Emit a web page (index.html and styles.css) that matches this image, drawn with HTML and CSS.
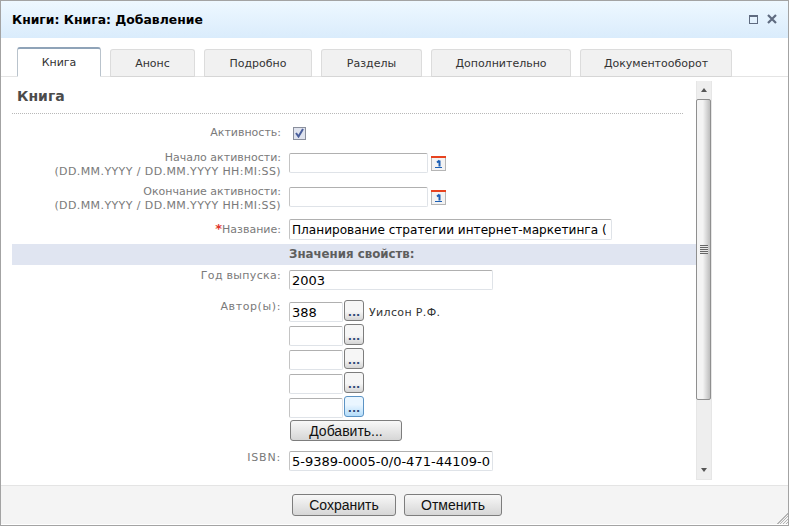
FILE: index.html
```html
<!DOCTYPE html>
<html lang="ru">
<head>
    <meta charset="UTF-8">
    <title>Книги: Книга: Добавление</title>
    <link rel="stylesheet" href="styles.css">
</head>
<body>
    <div class="window">
        <!-- Title bar -->
        <header class="titlebar">
            <h1>Книги: Книга: Добавление</h1>
            <div class="win-icons">
                <span class="win-max"></span>
                <svg class="win-close" width="10" height="10" viewBox="0 0 10 10"><path d="M1 1L9 9M9 1L1 9" stroke="#5f6b80" stroke-width="2.2" fill="none"/></svg>
            </div>
        </header>

        <!-- Tabs -->
        <nav class="tabs">
            <a class="tab tab-active tab-w84">Книга</a>
            <a class="tab tab-w85">Анонс</a>
            <a class="tab tab-w108">Подробно</a>
            <a class="tab tab-w101">Разделы</a>
            <a class="tab tab-w140">Дополнительно</a>
            <a class="tab tab-w152">Документооборот</a>
        </nav>

        <!-- Main -->
        <main class="body">
            <div class="content">
                <h2>Книга</h2>
                <div class="form">
                    <div class="row row-check">
                        <label>Активность:</label>
                        <div class="fake-check">
                            <svg width="9" height="10" viewBox="0 0 9 10"><path d="M1 5L3.5 8.5L8 1" stroke="#4a5f9c" stroke-width="2" fill="none"/></svg>
                        </div>
                    </div>
                    <div class="row row-date">
                        <label>Начало активности:<br><span class="latin">(DD.MM.YYYY / DD.MM.YYYY HH:MI:SS)</span></label>
                        <div class="ctrl">
                            <input class="input w-date" type="text">
                            <svg class="cal" width="15" height="15" viewBox="0 0 15 15"><rect x="0.5" y="0.5" width="14" height="14" fill="#f3f3f3" stroke="#b5b5b5"/><rect x="0" y="0" width="15" height="2" fill="#e8431f"/><path d="M8.5 4.5V10.5M6 6.5L8.5 4.5" stroke="#1c5fb5" stroke-width="2" fill="none"/><rect x="4" y="11" width="7" height="1" fill="#1c5fb5"/></svg>
                        </div>
                    </div>
                    <div class="row row-date">
                        <label>Окончание активности:<br><span class="latin">(DD.MM.YYYY / DD.MM.YYYY HH:MI:SS)</span></label>
                        <div class="ctrl">
                            <input class="input w-date" type="text">
                            <svg class="cal" width="15" height="15" viewBox="0 0 15 15"><rect x="0.5" y="0.5" width="14" height="14" fill="#f3f3f3" stroke="#b5b5b5"/><rect x="0" y="0" width="15" height="2" fill="#e8431f"/><path d="M8.5 4.5V10.5M6 6.5L8.5 4.5" stroke="#1c5fb5" stroke-width="2" fill="none"/><rect x="4" y="11" width="7" height="1" fill="#1c5fb5"/></svg>
                        </div>
                    </div>
                    <div class="row row-name">
                        <label><span class="req">*</span>Название:</label>
                        <input class="input w-name" type="text" value="Планирование стратегии интернет-маркетинга (Wilson)">
                    </div>
                    <div class="band">Значения свойств:</div>
                    <div class="row row-year">
                        <label>Год выпуска:</label>
                        <input class="input w-long" type="text" value="2003">
                    </div>
                    <div class="row row-authors">
                        <label>Автор(ы):</label>
                        <div class="authors">
                            <div class="author">
                                <input class="input w-short" type="text" value="388">
                                <button class="dots" type="button">...</button>
                                <span class="author-name">Уилсон Р.Ф.</span>
                            </div>
                            <div class="author">
                                <input class="input w-short" type="text">
                                <button class="dots" type="button">...</button>
                            </div>
                            <div class="author">
                                <input class="input w-short" type="text">
                                <button class="dots" type="button">...</button>
                            </div>
                            <div class="author">
                                <input class="input w-short" type="text">
                                <button class="dots" type="button">...</button>
                            </div>
                            <div class="author">
                                <input class="input w-short" type="text">
                                <button class="dots dots-hover" type="button">...</button>
                            </div>
                            <button class="btn btn-add" type="button">Добавить...</button>
                        </div>
                    </div>
                    <div class="row row-isbn">
                        <label>ISBN:</label>
                        <input class="input w-long" type="text" value="5-9389-0005-0/0-471-44109-0">
                    </div>
                </div>
            </div>

            <!-- Scrollbar -->
            <div class="scrollbar">
                <div class="arrow arrow-up"></div>
                <div class="thumb"><span class="grip"></span></div>
                <div class="arrow arrow-down"></div>
            </div>
        </main>

        <!-- Footer -->
        <footer class="footer">
            <button class="btn btn-save" type="button">Сохранить</button>
            <button class="btn btn-cancel" type="button">Отменить</button>
            <span class="resizer"></span>
        </footer>
    </div>
</body>
</html>
```

FILE: styles.css
```css
* {
    box-sizing: border-box;
}
html, body {
    margin: 0;
    padding: 0;
    overflow: hidden;
}
body {
    width: 789px;
    height: 526px;
    font-family: "DejaVu Sans", Verdana, sans-serif;
    font-size: 11px;
    color: #333;
    background-color: #fff;
}
.window {
    position: relative;
    width: 789px;
    height: 526px;
    display: flex;
    flex-direction: column;
    border: 1px solid #a3a3a3;
    background-color: #fff;
}
.titlebar {
    height: 37px;
    flex: none;
    display: flex;
    align-items: center;
    justify-content: space-between;
    padding: 0 11px;
    background: linear-gradient(to bottom, #eef8ff, #daecfc);
}
.titlebar h1 {
    margin: 0;
    font-size: 12.4px;
    font-weight: bold;
    color: #000;
}
.win-icons {
    display: flex;
    align-items: center;
    gap: 9px;
    margin-top: -1px;
}
.win-max {
    width: 9px;
    height: 9px;
    border: 1px solid #5f6b80;
    border-top-width: 2px;
}
.tabs {
    height: 39px;
    flex: none;
    display: flex;
    align-items: flex-end;
    gap: 9px;
    padding-left: 16px;
    border-bottom: 1px solid #e4e4e4;
}
.tab {
    height: 28px;
    margin-bottom: -1px;
    display: flex;
    align-items: center;
    justify-content: center;
    background-color: #f1f1f1;
    border: 1px solid #dcdcdc;
    border-bottom: 1px solid #d6d6d6;
    border-radius: 3px 3px 0 0;
    color: #333;
}
.tab-active {
    height: 30px;
    background-color: #fff;
    border-color: #b9c3cc;
    border-top: 2px solid #8fa3b8;
    border-bottom-color: #fff;
}
.tab-w84 { width: 84px; }
.tab-w85 { width: 85px; }
.tab-w108 { width: 108px; }
.tab-w101 { width: 101px; }
.tab-w140 { width: 140px; }
.tab-w152 { width: 152px; }
.body {
    height: 408px;
    flex: none;
    display: flex;
    overflow: hidden;
    padding-left: 11px;
}
.content {
    width: 684px;
    flex: none;
}
.content h2 {
    margin: 0 13px 0 0;
    height: 37px;
    padding: 9px 0 0 5px;
    font-size: 14px;
    line-height: 20px;
    color: #4b4b4b;
    border-bottom: 1px dotted #b8b8b8;
}
.form {
    display: flex;
    flex-direction: column;
}
.row {
    display: grid;
    grid-template-columns: 269px 1fr;
    column-gap: 8px;
}
.row label {
    text-align: right;
    color: #7a7a7a;
    line-height: 14px;
}
.latin {
    letter-spacing: 0.4px;
}
.req {
    color: #e0342c;
    font-weight: bold;
    font-size: 13px;
}
.row-check {
    height: 22px;
    margin-top: 8px;
    align-items: center;
}
.fake-check {
    width: 13px;
    height: 13px;
    margin-left: 4px;
    border: 1px solid #8a8f9c;
    background-color: #dfe3ee;
    display: flex;
    align-items: center;
    justify-content: center;
}
.row-date {
    height: 34px;
    align-items: center;
}
.row-date label {
    margin-top: 3px;
}
.row-check + .row-date {
    margin-top: 2px;
}
.ctrl {
    display: flex;
    align-items: center;
    gap: 3px;
    height: 20px;
}
.cal {
    flex: none;
}
.input {
    height: 20px;
    padding: 0 2px;
    font-family: "DejaVu Sans", Verdana, sans-serif;
    font-size: 13px;
    color: #000;
    background-color: #fff;
    border: 1px solid #dfe3e8;
    border-top-color: #b0b0b0;
    border-left-color: #c4c4c4;
    border-radius: 2px;
    outline: none;
}
.w-date { width: 139px; }
.w-name { width: 323px; height: 21px; padding-right: 5px; font-size: 12.1px; }
.w-long { width: 204px; }
.w-short { width: 54px; }
.row-name {
    height: 21px;
    margin-top: 5px;
    align-items: center;
}
.band {
    height: 21px;
    margin-top: 4px;
    padding-left: 277px;
    line-height: 21px;
    font-size: 11.8px;
    font-weight: bold;
    color: #5e5e5e;
    background-color: #e0e5f1;
}
.row-year {
    margin-top: 5px;
}
.row-year label {
    margin-top: -1px;
    letter-spacing: 0.3px;
}
.row-authors {
    margin-top: 12px;
}
.row-authors label {
    margin-top: -2px;
    letter-spacing: 0.6px;
}
.authors {
    display: flex;
    flex-direction: column;
    gap: 4px;
}
.author {
    display: flex;
    align-items: flex-start;
    height: 20px;
}
.dots {
    width: 20px;
    height: 21px;
    margin-left: 1px;
    margin-top: -2px;
    padding: 4px 0 0;
    font-family: "DejaVu Sans", Verdana, sans-serif;
    font-size: 11px;
    font-weight: bold;
    line-height: 10px;
    color: #2f4a78;
    border: 1px solid #7d7d7d;
    border-radius: 3px;
    background: linear-gradient(to bottom, #f6f6f6 55%, #d5d5d5);
}
.dots-hover {
    border-color: #5b93c4;
    background: linear-gradient(to bottom, #eaf6ff 40%, #b3dcfa);
}
.author-name {
    margin-left: 5px;
    align-self: center;
    letter-spacing: 0.35px;
    color: #333;
}
.btn {
    font-family: "Liberation Sans", Arial, sans-serif;
    font-size: 14px;
    color: #111;
    border: 1px solid #7d7d7d;
    border-radius: 3px;
    background: linear-gradient(to bottom, #f8f8f8, #d6d6d6);
    padding: 0;
}
.btn-add {
    width: 112px;
    height: 21px;
    margin-left: 1px;
    margin-top: -2px;
}
.row-isbn {
    margin-top: 10px;
}
.row-isbn label {
    letter-spacing: 0.8px;
}
.scrollbar {
    width: 16px;
    height: 399px;
    flex: none;
    margin-top: 4px;
    background-color: #eeeeee;
    border: 1px solid #e6e6e6;
    border-top: none;
    display: flex;
    flex-direction: column;
    position: relative;
}
.arrow {
    position: absolute;
    left: 4px;
    width: 0;
    height: 0;
    border-left: 3.5px solid transparent;
    border-right: 3.5px solid transparent;
}
.arrow-up {
    top: 7px;
    border-bottom: 4px solid #555;
}
.arrow-down {
    bottom: 7px;
    border-top: 4px solid #555;
}
.thumb {
    width: 15px;
    height: 301px;
    margin-top: 18px;
    margin-left: -1px;
    padding-top: 145px;
    border: 1px solid #8f8f8f;
    border-radius: 2px;
    background: linear-gradient(to right, #f4f4f4 45%, #bdbdbd);
    display: flex;
    align-items: flex-start;
    justify-content: center;
}
.grip {
    width: 8px;
    height: 9px;
    background: repeating-linear-gradient(to bottom, #666 0, #666 1px, #e8e8e8 1px, #e8e8e8 2px);
}
.footer {
    height: 39px;
    flex: none;
    position: relative;
    display: flex;
    align-items: flex-start;
    gap: 8px;
    padding: 8px 0 0 291px;
    background-color: #f4f4f4;
    border-top: 1px solid #e4e4e4;
}
.btn-save {
    width: 104px;
    height: 22px;
}
.btn-cancel {
    width: 98px;
    height: 22px;
}
.resizer {
    position: absolute;
    right: 0;
    bottom: 0;
    width: 12px;
    height: 12px;
    background: repeating-linear-gradient(135deg, transparent 0, transparent 1px, #b5b5b5 1px, #b5b5b5 2px);
    clip-path: polygon(100% 0, 100% 100%, 0 100%);
}
```
